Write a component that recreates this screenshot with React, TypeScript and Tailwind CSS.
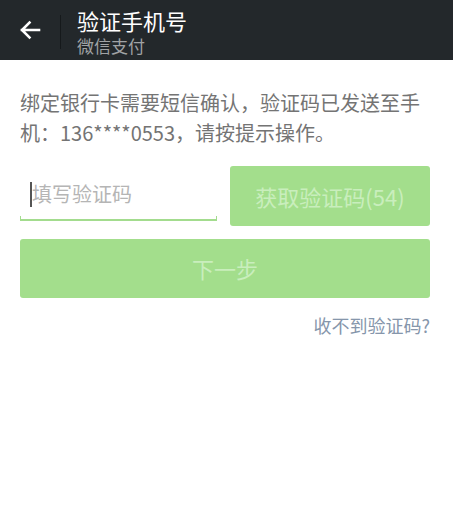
import React from "react";

export default function App() {
  const font = { fontFamily: '"Noto Sans CJK SC", "Noto Sans", sans-serif' };
  return (
    <div className="w-[453px] h-[514px] bg-white flex flex-col" style={font}>
      <div className="h-[60px] bg-[#23282b] flex items-center shrink-0">
        <div className="w-[60px] h-full flex items-center justify-center">
          <svg width="22" height="20" viewBox="0 0 22 20" fill="none">
            <path d="M20 10H3M10.5 2.5L3 10l7.5 7.5" stroke="#ffffff" strokeWidth="2.6" strokeLinecap="square" />
          </svg>
        </div>
        <div className="w-[1px] h-[34px] mt-[4px] bg-[#15191b]" />
        <div className="flex flex-col self-start pl-[16px] pt-[7px]">
          <div className="text-[22px] leading-[27px] text-white">验证手机号</div>
          <div className="text-[17px] leading-[22px] mt-[1px] text-[#a0a3a5]">微信支付</div>
        </div>
      </div>
      <div className="pl-5 pr-[23px] flex flex-col">
        <p className="pt-[28px] text-[20px] leading-[30px] text-[#747474]">
          绑定银行卡需要短信确认，验证码已发送至手机：136****0553，请按提示操作。
        </p>
        <div className="mt-[18px] flex gap-[13px] h-[60px]">
          <div className="flex-1 relative flex items-center">
            <div className="ml-[10px] h-[25px] w-[2px] bg-[#555] -mt-[4px]" />
            <span className="text-[20px] text-[#b5b5b5] -mt-[4px]">填写验证码</span>
            <div className="absolute left-0 right-0 bottom-[5px] h-[2px] bg-[#a3dc8e]" />
            <div className="absolute left-0 bottom-[5px] h-[5px] w-[1px] bg-[#a3dc8e]" />
            <div className="absolute right-0 bottom-[5px] h-[5px] w-[1px] bg-[#a3dc8e]" />
          </div>
          <div className="w-[200px] rounded-[3px] bg-[#a3de8c] flex items-center justify-center text-[22px] text-[#c9eebd]">
            获取验证码(54)
          </div>
        </div>
        <div className="mt-[13px] h-[59px] rounded-[3px] bg-[#a3de8c] flex items-center justify-center text-[22px] text-[#c9eebd]">
          下一步
        </div>
        <div className="mt-[15px] text-right text-[18px] leading-[24px] text-[#8696ab]">收不到验证码?</div>
      </div>
    </div>
  );
}
